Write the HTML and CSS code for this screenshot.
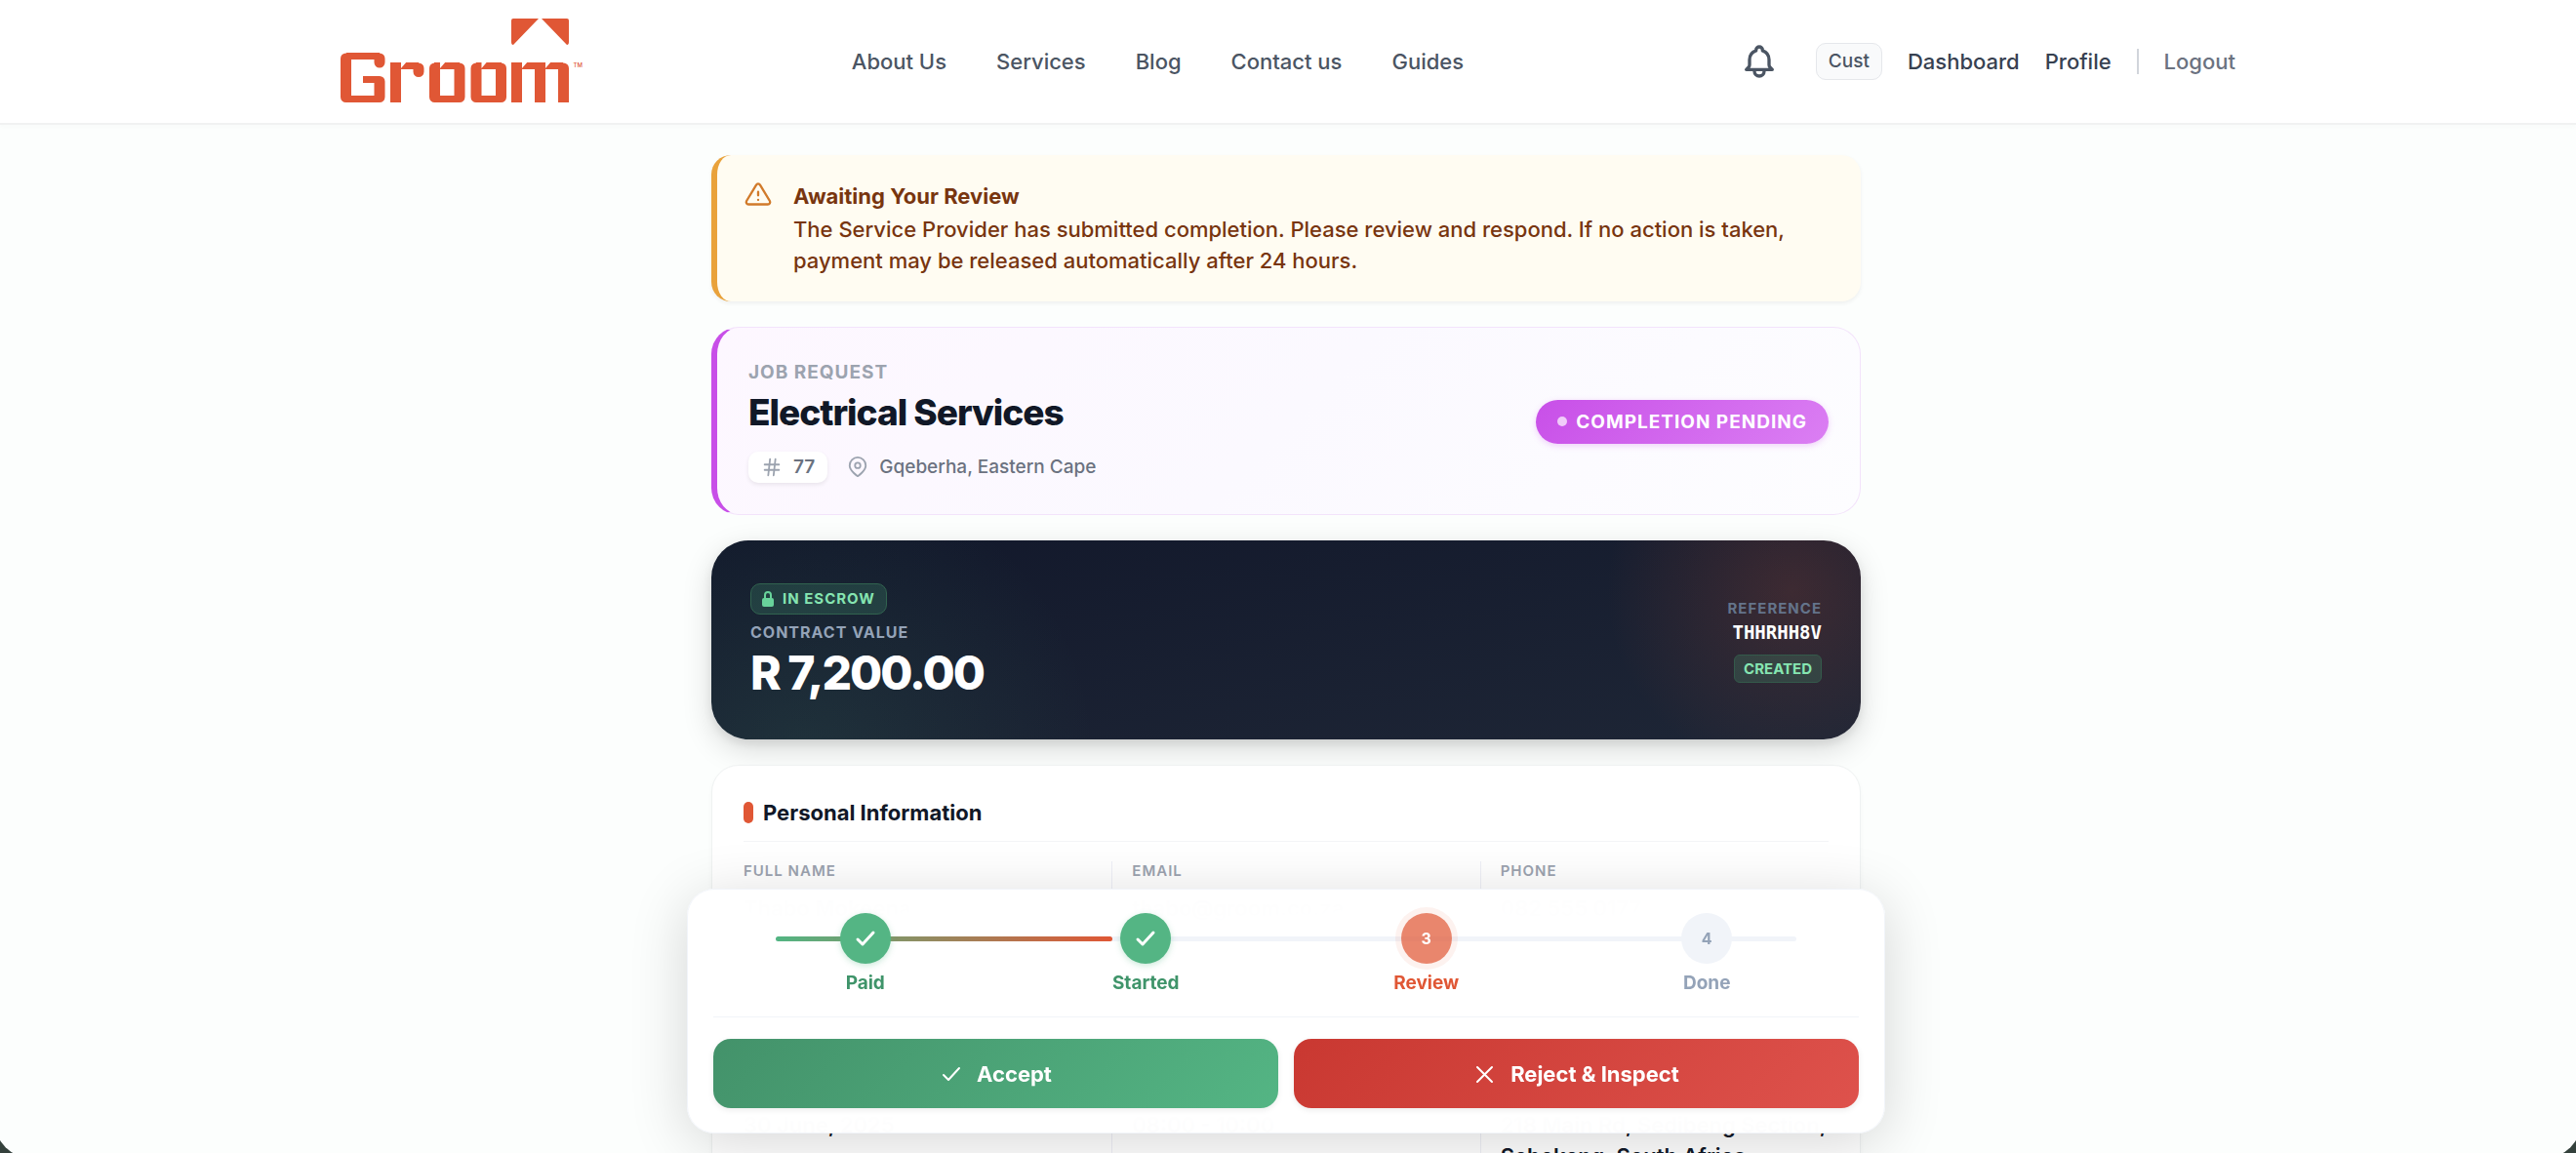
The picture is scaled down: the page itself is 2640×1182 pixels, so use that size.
FILE: index.html
```html
<!DOCTYPE html>
<html lang="en">
<head>
    <meta charset="UTF-8">
    <meta name="viewport" content="width=device-width, initial-scale=1.0">
    <title>Groom - Job Request</title>
    <link rel="stylesheet" href="styles.css">
</head>
<body>

<header class="site-header">
    <div class="header-inner">
        <a href="#" class="logo" aria-label="Groom">
            <svg width="248" height="88" viewBox="0 0 248 88" fill="#e05735">
                <!-- roof -->
                <path d="M177 0H203L177 27Q175 27 175 24V2Q175 0 177 0ZM206 0H232Q234 0 234 2V24Q234 27 232 27Z"/>
                <!-- wordmark -->
                <g fill="none" stroke="#e05735" stroke-width="11" transform="translate(0 1)">
                    <path stroke-linecap="round" d="M5.500 40V79.500M40 40V44M40 63.500V79.500M80 50V53.500M96.500 50V79.500M122 50V79.500M139 50V79.500M164.500 50V79.500M228.500 50V60"/>
                    <path d="M56.500 44V85M180.500 44V85M204.500 44V85M228.500 55V85"/>
                    <path stroke-width="7" d="M6 37.500H40M6 81.500H40M23 61.500H40M56 47.500H80M96 47.500H122M96 81.500H122M139 47.500H165M139 81.500H165M180 47.500H228"/>
                </g>
                <path fill="#fff" d="M62 44h6l-6 7zM102 44h6l-6 7zM144.500 44h6l-6 7zM186 44h6l-6 7zM210 44h6l-6 7z"/>
            </svg>
            <span class="tm">TM</span>
        </a>
        <nav class="main-nav">
            <a href="#">About Us</a>
            <a href="#">Services</a>
            <a href="#">Blog</a>
            <a href="#">Contact us</a>
            <a href="#">Guides</a>
        </nav>
        <div class="user-nav">
            <button type="button" class="bell" aria-label="Notifications">
                <svg width="40" height="40" viewBox="0 0 24 24" fill="none" stroke="currentColor" stroke-width="2" stroke-linecap="round" stroke-linejoin="round"><path d="M15 17h5l-1.405-1.405A2.032 2.032 0 0118 14.158V11a6.002 6.002 0 00-4-5.659V5a2 2 0 10-4 0v.341C7.670 6.165 6 8.388 6 11v3.159c0 .538-.214 1.055-.595 1.436L4 17h5m6 0v1a3 3 0 11-6 0v-1m6 0H9"/></svg>
            </button>
            <span class="role">Cust</span>
            <a href="#">Dashboard</a>
            <a href="#">Profile</a>
            <a href="#" class="logout">Logout</a>
        </div>
    </div>
</header>

<main class="page">
    <section class="notice">
        <svg width="28" height="28" viewBox="0 0 24 24" fill="none" stroke="currentColor" stroke-width="2" stroke-linecap="round" stroke-linejoin="round"><path d="M10.300 3.900 1.800 18a2 2 0 0 0 1.700 3h17a2 2 0 0 0 1.700-3L13.700 3.900a2 2 0 0 0-3.400 0z"/><path d="M12 10v3M12 17h.01"/></svg>
        <div>
            <h2>Awaiting Your Review</h2>
            <p>The Service Provider has submitted completion. Please review and respond. If no action is taken, payment may be released automatically after 24 hours.</p>
        </div>
    </section>

    <section class="job">
        <div>
            <p class="job-label">JOB REQUEST</p>
            <h1>Electrical Services</h1>
            <div class="job-meta">
                <span class="job-id">
                    <svg width="22" height="22" viewBox="0 0 24 24" fill="none" stroke="#9ca3af" stroke-width="2" stroke-linecap="round"><path d="M4 9h16M4 15h16M10 3 8 21M16 3l-2 18"/></svg>
                    77
                </span>
                <span class="job-place">
                    <svg width="22" height="22" viewBox="0 0 24 24" fill="none" stroke="#9ca3af" stroke-width="2" stroke-linejoin="round"><path d="M21 10c0 6-9 12-9 12s-9-6-9-12a9 9 0 0 1 18 0z"/><circle cx="12" cy="10" r="3"/></svg>
                    Gqeberha, Eastern Cape
                </span>
            </div>
        </div>
        <span class="status">COMPLETION PENDING</span>
    </section>

    <section class="escrow">
        <div>
            <span class="escrow-badge">
                <svg width="12" height="18" viewBox="0 0 12 18"><rect y="8" width="12" height="9" rx="2" fill="#68d39b"/><path d="M3 9V5a3 3 0 0 1 6 0v4" fill="none" stroke="#68d39b" stroke-width="2"/></svg>
                IN ESCROW
            </span>
            <p class="escrow-label">CONTRACT VALUE</p>
            <p class="amount">R 7,200.00</p>
        </div>
        <div class="reference">
            <p class="reference-label">REFERENCE</p>
            <p class="reference-code">THHRHH8V</p>
            <span class="created">CREATED</span>
        </div>
    </section>

    <section class="info">
        <h2>Personal Information</h2>
        <dl class="info-grid">
            <div><dt>FULL NAME</dt><dd>Thabo Mokoena</dd></div>
            <div><dt>EMAIL</dt><dd>thabo@groom.co.za</dd></div>
            <div><dt>PHONE</dt><dd>082 555 0177</dd></div>
        </dl>
        <dl class="info-grid">
            <div><dt>DATE</dt><dd>30 June, 2025</dd></div>
            <div><dt>TIME</dt><dd>08:00 - 10:00</dd></div>
            <div><dt>ADDRESS</dt><dd>218 Main Rd, Sedibeng Section,<br>Sebokeng, South Africa</dd></div>
        </dl>
    </section>
</main>

<div class="action-bar">
    <ol class="steps">
        <li class="done"><span class="dot"><svg width="24" height="24" viewBox="0 0 24 24" fill="none" stroke="currentColor" stroke-width="3" stroke-linecap="round" stroke-linejoin="round"><path d="M4 13l5 5L20 6"/></svg></span>Paid</li>
        <li class="done"><span class="dot"><svg width="24" height="24" viewBox="0 0 24 24" fill="none" stroke="currentColor" stroke-width="3" stroke-linecap="round" stroke-linejoin="round"><path d="M4 13l5 5L20 6"/></svg></span>Started</li>
        <li class="current"><span class="dot">3</span>Review</li>
        <li><span class="dot">4</span>Done</li>
    </ol>
    <div class="actions">
        <button type="button" class="accept"><svg width="24" height="24" viewBox="0 0 24 24" fill="none" stroke="currentColor" stroke-width="2" stroke-linecap="round" stroke-linejoin="round"><path d="M4 13l5 5L20 6"/></svg>Accept</button>
        <button type="button" class="reject"><svg width="24" height="24" viewBox="0 0 24 24" fill="none" stroke="currentColor" stroke-width="2" stroke-linecap="round"><path d="M4 5l15 15M19 5L4 20"/></svg>Reject &amp; Inspect</button>
    </div>
</div>

</body>
</html>
```
FILE: styles.css
```css
* {
    box-sizing: border-box;
}
html {
    overflow: hidden;
    background-color: #fcfefd;
}
body {
    margin: 0;
    font-family: Inter, "Liberation Sans", sans-serif;
    font-size: 22px;
    background-color: #fcfefd;
    color: #111827;
}
/* rounded window corners */
body::after {
    content: "";
    position: fixed;
    z-index: 20;
    inset: -50px -6px -6px;
    border-radius: 40px;
    box-shadow: 0 0 0 30px #34413c;
    pointer-events: none;
}
h1, h2, p, dl, dd, ol {
    margin: 0;
    padding: 0;
}
a {
    color: inherit;
    text-decoration: none;
}
button {
    font-family: inherit;
    border: none;
    cursor: pointer;
}

/* Header */
.site-header {
    background-color: #fff;
    border-bottom: 2px solid #f1f2f2;
    box-shadow: 0 2px 4px rgba(0, 0, 0, 0.02);
}
.header-inner {
    display: flex;
    justify-content: space-between;
    align-items: center;
    max-width: 1942px;
    height: 126px;
    margin: 0 auto;
    font-weight: 500;
}
.logo {
    display: flex;
    position: relative;
}
.logo svg {
    display: block;
}
.tm {
    position: absolute;
    right: 0;
    top: 44px;
    font-size: 6px;
    line-height: 8px;
    color: #e05735;
}
.main-nav {
    display: flex;
    gap: 51px;
    padding-right: 7px;
    color: #4b5563;
}
.user-nav {
    display: flex;
    align-items: center;
    gap: 26px;
    color: #374151;
}
.bell {
    display: flex;
    margin-right: 12px;
    padding: 0;
    background: none;
    color: #4b5563;
}
.role {
    padding: 6px 12px;
    border: 1px solid #e5e7eb;
    border-radius: 10px;
    background-color: #f9fafb;
    font-size: 19px;
    line-height: 24px;
    color: #4b5563;
}
.logout {
    padding-left: 26px;
    border-left: 2px solid #d1d5db;
    color: #6b7280;
}

.page {
    display: flex;
    flex-direction: column;
    gap: 26px;
    width: 1182px;
    max-width: 100%;
    margin: 0 auto;
    padding: 31px 4px 0 0;
}
.notice {
    display: flex;
    gap: 22px;
    padding: 24px 28px 26px;
    border-left: 6px solid #e9a23b;
    border-radius: 20px;
    background-color: #fffcf2;
    box-shadow: 0 2px 4px rgba(0, 0, 0, 0.06);
    color: #78350f;
}
.notice svg {
    flex: none;
    margin-top: 2px;
    color: #d17a2b;
}
.notice h2 {
    font-size: 22px;
    line-height: 36px;
}
.notice p {
    font-weight: 500;
    line-height: 32px;
}
.job {
    display: flex;
    justify-content: space-between;
    align-items: center;
    padding: 33px 32px 32px;
    border: 1px solid #f3e3fb;
    border-left: 6px solid #c84fe8;
    border-radius: 28px;
    background: linear-gradient(135deg, #fdf7ff, #fbf9ff 50%, #fdfdff);
}
.job-label {
    font-size: 19px;
    font-weight: 700;
    line-height: 26px;
    letter-spacing: 1px;
    color: #9ca3af;
}
.job h1 {
    font-size: 37px;
    font-weight: 800;
    line-height: 56px;
    letter-spacing: -1px;
}
.job-meta {
    display: flex;
    gap: 20px;
    margin-top: 12px;
    font-size: 19px;
    font-weight: 500;
    line-height: 32px;
    color: #6b7280;
}
.job-id, .job-place {
    display: flex;
    align-items: center;
    gap: 11px;
}
.job-id {
    padding: 0 13px;
    border-radius: 10px;
    background-color: #fff;
    box-shadow: 0 2px 4px rgba(0, 0, 0, 0.08);
    font-weight: 600;
}
.status {
    display: flex;
    align-items: center;
    gap: 9px;
    padding: 0 22px;
    border-radius: 23px;
    background: linear-gradient(135deg, #c84fe8, #db7ff3);
    box-shadow: 0 2px 6px rgba(200, 79, 232, 0.25);
    font-size: 19px;
    font-weight: 700;
    line-height: 45px;
    letter-spacing: 1px;
    color: #fff;
}
.status::before {
    content: "";
    width: 10px;
    height: 10px;
    border-radius: 50%;
    background-color: rgba(255, 255, 255, 0.7);
}
.escrow {
    display: flex;
    justify-content: space-between;
    align-items: center;
    height: 204px;
    padding: 0 40px;
    border-radius: 38px;
    background:
        radial-gradient(circle at 94% 25%, rgba(224, 87, 53, 0.18), transparent 190px),
        radial-gradient(circle at 8% 110%, rgba(82, 181, 131, 0.12), transparent 300px),
        linear-gradient(170deg, #12182b, #1e2636);
    box-shadow: 0 10px 30px rgba(0, 0, 0, 0.15), 0 4px 10px rgba(0, 0, 0, 0.08);
}
.escrow-badge {
    display: inline-flex;
    align-items: center;
    gap: 9px;
    padding: 0 11px;
    border: 1px solid #31634f;
    border-radius: 10px;
    background-color: rgba(82, 181, 131, 0.2);
    font-size: 15px;
    font-weight: 700;
    line-height: 30px;
    letter-spacing: 1px;
    color: #86e5b1;
}
.escrow-label {
    font-size: 16px;
    font-weight: 700;
    line-height: 36px;
    letter-spacing: 1px;
    color: #94a3b8;
}
.amount {
    font-size: 48px;
    font-weight: 800;
    line-height: 48px;
    letter-spacing: -2px;
    color: #fff;
}
.reference {
    text-align: right;
}
.reference-label {
    font-size: 15px;
    font-weight: 700;
    line-height: 24px;
    letter-spacing: 1px;
    color: #64748b;
}
.reference-code {
    margin-bottom: 10px;
    font-family: "DejaVu Sans Mono", monospace;
    font-size: 19px;
    font-weight: 700;
    line-height: 24px;
    color: #fff;
}
.created {
    display: inline-block;
    padding: 0 9px;
    border: 1px solid #345a4b;
    border-radius: 6px;
    background-color: rgba(82, 181, 131, 0.2);
    font-size: 15px;
    font-weight: 700;
    line-height: 27px;
    color: #86e5b1;
}
.info {
    padding: 25px 32px 20px;
    border: 1px solid #eff2f2;
    border-radius: 28px;
    background-color: #fff;
    box-shadow: 0 2px 4px rgba(0, 0, 0, 0.03);
}
.info h2 {
    display: flex;
    align-items: center;
    gap: 10px;
    padding-bottom: 6px;
    border-bottom: 1px solid #f3f4f6;
    font-size: 22px;
    line-height: 46px;
}
.info h2::before {
    content: "";
    width: 10px;
    height: 22px;
    border-radius: 5px;
    background-color: #e05735;
}
.info-grid {
    display: grid;
    grid-template-columns: repeat(3, 1fr);
    gap: 20px;
    padding-top: 20px;
}
.info-grid > div {
    min-height: 202px;
}
.info-grid > div + div {
    padding-left: 20px;
    border-left: 1px solid #eeeff6;
}
.info-grid dt {
    margin-bottom: 12px;
    font-size: 15px;
    font-weight: 600;
    line-height: 20px;
    letter-spacing: 1px;
    color: #9ca3af;
}
.info-grid dd {
    font-weight: 600;
    line-height: 32px;
}

/* Fixed progress and action bar */
.action-bar {
    position: fixed;
    z-index: 10;
    bottom: 20px;
    left: 0;
    right: 4px;
    width: 1228px;
    max-width: 100%;
    margin: 0 auto;
    padding: 24px 26px 25px;
    border: 1px solid #f1f4f9;
    border-radius: 28px;
    background-color: rgba(255, 255, 255, 0.98);
    backdrop-filter: blur(20px);
    box-shadow: 0 10px 60px rgba(0, 0, 0, 0.16);
}
.steps {
    display: flex;
    position: relative;
    padding: 0 12px 21px;
    border-bottom: 1px solid #f1f4f9;
    list-style-type: none;
}
.steps::before, .steps::after {
    content: "";
    position: absolute;
    z-index: -1;
    top: 24px;
    left: 64px;
    right: 64px;
    height: 5px;
    border-radius: 3px;
    background-color: #f1f4f9;
}
.steps::after {
    right: auto;
    width: 345px;
    background: linear-gradient(90deg, #52b583, #e05735);
}
.steps li {
    display: flex;
    flex: 1;
    flex-direction: column;
    align-items: center;
    gap: 7px;
    font-size: 19px;
    font-weight: 700;
    line-height: 26px;
    color: #94a3b8;
}
.dot {
    display: flex;
    align-items: center;
    justify-content: center;
    width: 52px;
    height: 52px;
    border-radius: 50%;
    background-color: #f1f4f9;
    font-size: 16px;
}
.steps .done {
    color: #3f946a;
}
.done .dot {
    background-color: #54b584;
    box-shadow: 0 2px 6px rgba(82, 181, 131, 0.3);
    color: #fff;
}
.steps .current {
    color: #e05735;
}
.current .dot {
    background-color: rgba(224, 87, 53, 0.72);
    box-shadow: 0 0 0 6px rgba(224, 87, 53, 0.08);
    color: #fff;
}
.actions {
    display: grid;
    grid-template-columns: 1fr 1fr;
    gap: 16px;
    padding-top: 22px;
}
.actions button {
    display: flex;
    align-items: center;
    justify-content: center;
    gap: 14px;
    height: 71px;
    border-radius: 18px;
    font-size: 22px;
    font-weight: 700;
    color: #fff;
    box-shadow: 0 2px 6px rgba(0, 0, 0, 0.08);
}
.accept {
    background: linear-gradient(135deg, #43926a, #54b584);
}
.reject {
    background: linear-gradient(135deg, #c93831, #de524c);
}
```
